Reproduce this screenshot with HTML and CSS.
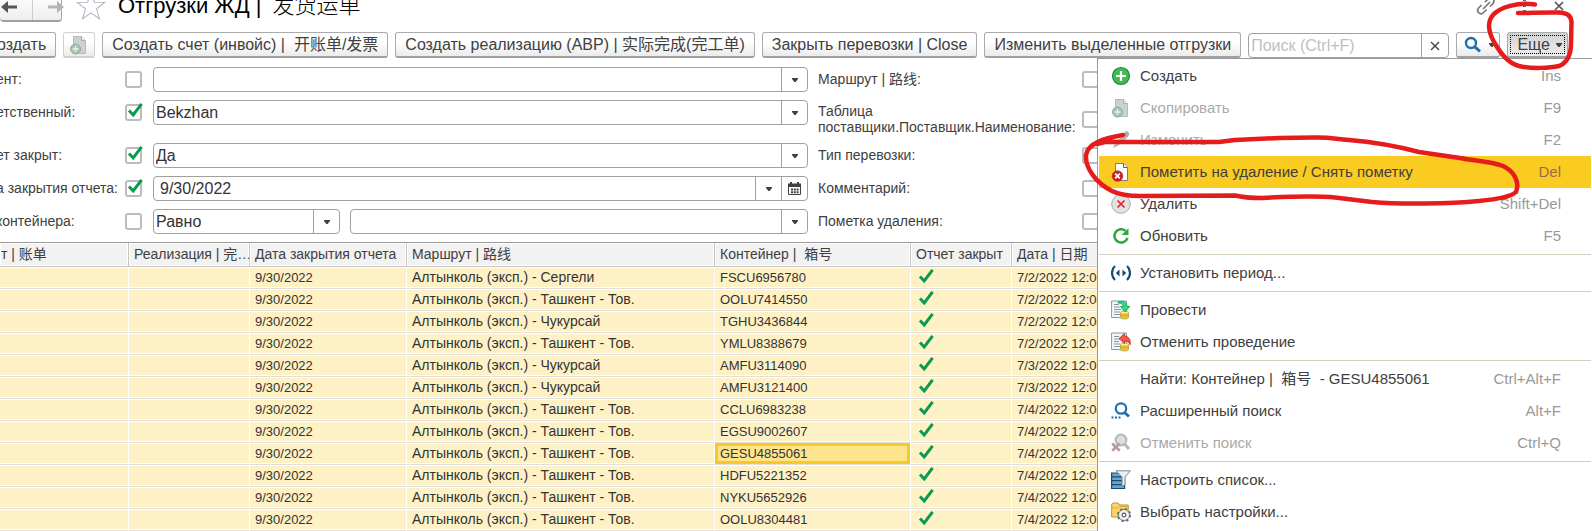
FILE: index.html
```html
<!DOCTYPE html>
<html lang="ru">
<head>
<meta charset="utf-8">
<title>Отгрузки ЖД</title>
<link rel="stylesheet" href="styles.css">
</head>
<body>
<svg class="defs" aria-hidden="true">
  <symbol id="check" viewBox="0 0 16 16"><path d="M2 8.500 L6.200 13 L14.600 1.800" fill="none" stroke="#0a9a4e" stroke-width="3"/></symbol>
  <symbol id="caret" viewBox="0 0 6 4"><path d="M0 0h6v1L3.600 4H2.400L0 1z" fill="#404040"/></symbol>
  <symbol id="copy" viewBox="0 0 20 20"><path d="M4.500 1.500h8l4 4v13h-12z" fill="#cbd0d4" stroke="#b4bac0"/><path d="M12.500 1.500v4h4" fill="#e8eaec" stroke="#a6adb4"/><circle cx="6.500" cy="14" r="5" fill="#a9c2ae" stroke="#8fae96"/><path d="M6.500 11v6M3.500 14h6" stroke="#e9f1ea" stroke-width="1.300"/></symbol>
</svg>

<div class="app">
  <header class="head">
    <div class="nav">
      <button type="button" aria-label="Назад"><svg width="18" height="14" viewBox="0 0 18 14"><path d="M17 7H6" stroke="#555" stroke-width="3"/><path d="M8 1L1 7l7 6z" fill="#555"/></svg></button>
      <button type="button" aria-label="Вперед"><svg width="18" height="14" viewBox="0 0 18 14"><path d="M1 7h10" stroke="#b5b5b5" stroke-width="3"/><path d="M10 1l7 6-7 6z" fill="#b5b5b5"/></svg></button>
    </div>
    <svg class="star" width="30" height="30" viewBox="0 0 30 30"><path d="M15 1.500l3.400 9.800 10.400.2-8.300 6.300 3 10L15 21.800l-8.500 6 3-10-8.300-6.300 10.400-.2z" fill="#fff" stroke="#b3bac4" stroke-width="1.100"/></svg>
    <h1>Отгрузки ЖД | <span>发货运单</span></h1>
    <div class="winbtns">
      <button type="button" aria-label="Ссылка"><svg width="20" height="20" viewBox="0 0 20 20" fill="none" stroke="#777" stroke-width="1.700"><path d="M5.500 9L2.600 12c-3 4 2 7.500 5 4.500l3-3M9 6l3-3c4-3 7.500 1 5 4.500l-3 3M7 13l7-7"/></svg></button>
      <button type="button" aria-label="Меню"><svg width="6" height="20" viewBox="0 0 6 20" fill="#666"><rect x="1" y="2" width="3" height="3"/><rect x="1" y="8" width="3" height="3"/><rect x="1" y="14" width="3" height="3"/></svg></button>
      <button type="button" aria-label="Закрыть"><svg width="10" height="10" viewBox="0 0 10 10"><path d="M1 1l8 8M9 1L1 9" stroke="#555" stroke-width="1.700"/></svg></button>
    </div>
  </header>

  <div class="toolbar">
    <button type="button" class="btn first">оздать</button>
    <button type="button" class="btn icon faded" aria-label="Скопировать"><svg width="20" height="20"><use href="#copy"/></svg></button>
    <button type="button" class="btn">Создать счет (инвойс) |&nbsp; 开账单/发票</button>
    <button type="button" class="btn">Создать реализацию (АВР) | 实际完成(完工单)</button>
    <button type="button" class="btn">Закрыть перевозки | Close</button>
    <button type="button" class="btn">Изменить выделенные отгрузки</button>
    <div class="search"><input type="text" placeholder="Поиск (Ctrl+F)" aria-label="Поиск"><button type="button" aria-label="Очистить"><svg width="10" height="10" viewBox="0 0 10 10"><path d="M1 1l8 8M9 1L1 9" stroke="#444" stroke-width="1.400"/></svg></button></div>
    <button type="button" class="btn find" aria-label="Найти"><svg width="18" height="18" viewBox="0 0 18 18" fill="none" stroke="#2270a8"><circle cx="7" cy="7" r="5" stroke-width="2.400"/><path d="M10.800 10.800l5.200 4.700" stroke-width="3"/></svg><svg width="6" height="4"><use href="#caret"/></svg></button>
    <button type="button" class="btn more"><span>Еще <svg width="6" height="4"><use href="#caret"/></svg></span></button>
  </div>

  <form class="filters">
    <label for="c1" class="lead">ент:</label>
    <span class="tick"><input type="checkbox" id="c1"></span>
    <div class="combo"><select aria-label="Клиент"><option></option></select><span class="drop"><svg width="6" height="4"><use href="#caret"/></svg></span></div>
    <label for="d1">Маршрут | 路线:</label>
    <span class="tick"><input type="checkbox" id="d1"></span>

    <label for="c2" class="lead">етственный:</label>
    <span class="tick"><input type="checkbox" id="c2" checked><svg width="16" height="16"><use href="#check"/></svg></span>
    <div class="combo"><select aria-label="Ответственный"><option>Bekzhan</option></select><span class="drop"><svg width="6" height="4"><use href="#caret"/></svg></span></div>
    <label for="d2" class="two">Таблица поставщики.Поставщик.Наименование:</label>
    <span class="tick mid"><input type="checkbox" id="d2"></span>

    <label for="c3" class="lead">ет закрыт:</label>
    <span class="tick"><input type="checkbox" id="c3" checked><svg width="16" height="16"><use href="#check"/></svg></span>
    <div class="combo"><select aria-label="Отчет закрыт"><option>Да</option></select><span class="drop"><svg width="6" height="4"><use href="#caret"/></svg></span></div>
    <label for="d3">Тип перевозки:</label>
    <span class="tick"><input type="checkbox" id="d3"></span>

    <label for="c4" class="lead">а закрытия отчета:</label>
    <span class="tick"><input type="checkbox" id="c4" checked><svg width="16" height="16"><use href="#check"/></svg></span>
    <div class="combo"><input type="text" value="9/30/2022" aria-label="Дата закрытия отчета"><button type="button" class="drop" aria-label="Выбрать"><svg width="6" height="4"><use href="#caret"/></svg></button><button type="button" class="drop" aria-label="Календарь"><svg width="13" height="13" viewBox="0 0 13 13"><path d="M.5 4V2.500h12V12.500H.5z" fill="none" stroke="#404040"/><path d="M0 1.500h13V5H0zM2 0h2v2H2zM9 0h2v2H9z" fill="#404040"/><path d="M3 6.500h2v2H3zM5.800 6.500h2v2h-2zM8.600 6.500h2v2h-2zM3 9.300h2v2H3zM5.800 9.300h2v2h-2zM8.600 9.300h2v2h-2z" fill="#404040"/></svg></button></div>
    <label for="d4">Комментарий:</label>
    <span class="tick"><input type="checkbox" id="d4"></span>

    <label for="c5" class="lead">контейнера:</label>
    <span class="tick"><input type="checkbox" id="c5"></span>
    <div class="pair">
      <div class="combo"><select aria-label="Вид сравнения"><option>Равно</option></select><span class="drop"><svg width="6" height="4"><use href="#caret"/></svg></span></div>
      <div class="combo"><select aria-label="Номер контейнера"><option></option></select><span class="drop"><svg width="6" height="4"><use href="#caret"/></svg></span></div>
    </div>
    <label for="d5">Пометка удаления:</label>
    <span class="tick"><input type="checkbox" id="d5"></span>
  </form>

  <table class="list">
    <colgroup><col class="w1"><col class="w2"><col class="w3"><col class="w4"><col class="w5"><col class="w6"><col></colgroup>
    <thead><tr><th>т | 账单</th><th>Реализация | 完…</th><th>Дата закрытия отчета</th><th>Маршрут | 路线</th><th>Контейнер |&nbsp; 箱号</th><th>Отчет закрыт</th><th>Дата | 日期</th></tr></thead>
    <tbody>
      <tr><td></td><td></td><td>9/30/2022</td><td class="route">Алтынколь (эксп.) - Сергели</td><td>FSCU6956780</td><td><svg width="16" height="16"><use href="#check"/></svg></td><td>7/2/2022 12:00:00</td></tr>
      <tr><td></td><td></td><td>9/30/2022</td><td class="route">Алтынколь (эксп.) - Ташкент - Тов.</td><td>OOLU7414550</td><td><svg width="16" height="16"><use href="#check"/></svg></td><td>7/2/2022 12:00:00</td></tr>
      <tr><td></td><td></td><td>9/30/2022</td><td class="route">Алтынколь (эксп.) - Чукурсай</td><td>TGHU3436844</td><td><svg width="16" height="16"><use href="#check"/></svg></td><td>7/2/2022 12:00:00</td></tr>
      <tr><td></td><td></td><td>9/30/2022</td><td class="route">Алтынколь (эксп.) - Ташкент - Тов.</td><td>YMLU8388679</td><td><svg width="16" height="16"><use href="#check"/></svg></td><td>7/2/2022 12:00:00</td></tr>
      <tr><td></td><td></td><td>9/30/2022</td><td class="route">Алтынколь (эксп.) - Чукурсай</td><td>AMFU3114090</td><td><svg width="16" height="16"><use href="#check"/></svg></td><td>7/3/2022 12:00:00</td></tr>
      <tr><td></td><td></td><td>9/30/2022</td><td class="route">Алтынколь (эксп.) - Чукурсай</td><td>AMFU3121400</td><td><svg width="16" height="16"><use href="#check"/></svg></td><td>7/3/2022 12:00:00</td></tr>
      <tr><td></td><td></td><td>9/30/2022</td><td class="route">Алтынколь (эксп.) - Ташкент - Тов.</td><td>CCLU6983238</td><td><svg width="16" height="16"><use href="#check"/></svg></td><td>7/4/2022 12:00:00</td></tr>
      <tr><td></td><td></td><td>9/30/2022</td><td class="route">Алтынколь (эксп.) - Ташкент - Тов.</td><td>EGSU9002607</td><td><svg width="16" height="16"><use href="#check"/></svg></td><td>7/4/2022 12:00:00</td></tr>
      <tr><td></td><td></td><td>9/30/2022</td><td class="route">Алтынколь (эксп.) - Ташкент - Тов.</td><td class="cur">GESU4855061</td><td><svg width="16" height="16"><use href="#check"/></svg></td><td>7/4/2022 12:00:00</td></tr>
      <tr><td></td><td></td><td>9/30/2022</td><td class="route">Алтынколь (эксп.) - Ташкент - Тов.</td><td>HDFU5221352</td><td><svg width="16" height="16"><use href="#check"/></svg></td><td>7/4/2022 12:00:00</td></tr>
      <tr><td></td><td></td><td>9/30/2022</td><td class="route">Алтынколь (эксп.) - Ташкент - Тов.</td><td>NYKU5652926</td><td><svg width="16" height="16"><use href="#check"/></svg></td><td>7/4/2022 12:00:00</td></tr>
      <tr><td></td><td></td><td>9/30/2022</td><td class="route">Алтынколь (эксп.) - Ташкент - Тов.</td><td>OOLU8304481</td><td><svg width="16" height="16"><use href="#check"/></svg></td><td>7/4/2022 12:00:00</td></tr>
    </tbody>
  </table>

  <div class="menu" role="menu">
    <button type="button" role="menuitem"><svg width="20" height="20" viewBox="0 0 20 20"><circle cx="10" cy="10" r="8.500" fill="#45b955" stroke="#20893a" stroke-width="1.200"/><path d="M10 5v10M5 10h10" stroke="#fff" stroke-width="2.200"/></svg><span>Создать</span><kbd>Ins</kbd></button>
    <button type="button" role="menuitem" disabled><svg width="20" height="20"><use href="#copy"/></svg><span>Скопировать</span><kbd>F9</kbd></button>
    <button type="button" role="menuitem" disabled><svg width="20" height="20" viewBox="0 0 20 20"><path d="M2 18l2-5 8.500-8.500 3.500 3.500L7 16z" fill="#b3bbb9"/><path d="M12 4l2.500-2.500c1-1 4.500 1 3.500 3.500L16 8z" fill="#a2adb5"/></svg><span>Изменить</span><kbd>F2</kbd></button>
    <button type="button" role="menuitem" class="active"><svg width="20" height="20" viewBox="0 0 20 20"><path d="M4.500 1.500h8l4 4v13h-12z" fill="#fff" stroke="#7b8086"/><path d="M12.500 1.500v4h4" fill="#eee" stroke="#5f656b"/><circle cx="6.500" cy="14" r="5.300" fill="#d0202a" stroke="#a81920" stroke-width=".6"/><path d="M4.200 11.700l4.600 4.600M8.800 11.700l-4.600 4.600" stroke="#fff" stroke-width="1.700"/></svg><span>Пометить на удаление / Снять пометку</span><kbd>Del</kbd></button>
    <button type="button" role="menuitem"><svg width="20" height="20" viewBox="0 0 20 20"><circle cx="10" cy="10" r="9.300" fill="#e2e2e2" stroke="#aaa"/><path d="M6.500 6.500l7 7M13.500 6.500l-7 7" stroke="#e3202a" stroke-width="1.600"/></svg><span>Удалить</span><kbd>Shift+Del</kbd></button>
    <button type="button" role="menuitem"><svg width="20" height="20" viewBox="0 0 20 20"><path d="M14.500 4.800A6.700 6.700 0 1 0 16.500 12" fill="none" stroke="#2fa53c" stroke-width="2.500"/><path d="M17.500 2.200V9h-7z" fill="#2fa53c"/></svg><span>Обновить</span><kbd>F5</kbd></button>
    <hr>
    <button type="button" role="menuitem"><svg width="20" height="20" viewBox="0 0 20 20"><path d="M4 3C0 6.500 0 13.500 4 17M16 3c4 3.500 4 10.500 0 14" fill="none" stroke="#15506f" stroke-width="2.200"/><path d="M8.500 6.500v7L4.800 10zM11.500 6.500v7l3.700-3.500z" fill="#0f4c78"/></svg><span>Установить период...</span></button>
    <hr>
    <button type="button" role="menuitem"><svg width="20" height="20" viewBox="0 0 20 20"><path d="M.6 1h14.800v16.500H.6z" fill="#f6f7f8" stroke="#8b96a2"/><path d="M3 4.500h5M3 7h6M3 9.500h7M3 12h6M3 14.500h6" stroke="#8794a3"/><path d="M9.500 12.500h8v5c0 2-8 2-8 0z" fill="#eacb3d" stroke="#b4922a" stroke-width=".7"/><ellipse cx="13.500" cy="12.500" rx="4" ry="1.500" fill="#fff09a" stroke="#b4922a" stroke-width=".6"/><path d="M9.500 15c1 1.400 7 1.400 8 0" fill="none" stroke="#b4922a" stroke-width=".7"/><path d="M7 2c5-1.600 9 0 9 4.500h2.800L14 12 9.500 6.500h2.800C12 4 10 3 7 3z" fill="#2cde82" stroke="#14994f" stroke-width=".8"/></svg><span>Провести</span></button>
    <button type="button" role="menuitem"><svg width="20" height="20" viewBox="0 0 20 20"><path d="M.6 1h14.800v16.500H.6z" fill="#f6f7f8" stroke="#8b96a2"/><path d="M3 4.500h5M3 7h6M3 9.500h5M3 12h6M3 14.500h6" stroke="#8794a3"/><path d="M9.500 12.500h8v5c0 2-8 2-8 0z" fill="#eacb3d" stroke="#b4922a" stroke-width=".7"/><ellipse cx="13.500" cy="12.500" rx="4" ry="1.500" fill="#fff09a" stroke="#b4922a" stroke-width=".6"/><path d="M9.500 15c1 1.400 7 1.400 8 0" fill="none" stroke="#b4922a" stroke-width=".7"/><path d="M8 6.500L13.500 1.500V4c4 .3 6.500 3.500 5.700 8.800C18 10 16.500 9.200 13.500 9.200v2.500z" fill="#fb5347" stroke="#b42c26" stroke-width=".8"/></svg><span>Отменить проведение</span></button>
    <hr>
    <button type="button" role="menuitem"><svg width="20" height="20"></svg><span>Найти: Контейнер |&nbsp; 箱号&nbsp; - GESU4855061</span><kbd>Ctrl+Alt+F</kbd></button>
    <button type="button" role="menuitem"><svg width="20" height="20" viewBox="0 0 20 20" fill="none" stroke="#2270a8"><circle cx="10" cy="7.500" r="5.200" stroke-width="2.200"/><path d="M13.500 11.500l4.500 4" stroke-width="3"/><path d="M.5 16.500h2M4 16.500h2M7.500 16.500h2" stroke-width="2.200"/></svg><span>Расширенный поиск</span><kbd>Alt+F</kbd></button>
    <button type="button" role="menuitem" disabled><svg width="20" height="20" viewBox="0 0 20 20" fill="none"><circle cx="10" cy="7" r="5.400" fill="#dcdfe2" stroke="#b4b9bd" stroke-width="2"/><path d="M13.500 11l4.500 5" stroke="#b4b9bd" stroke-width="3"/><path d="M1.200 10.500l7.500 7.300M8.700 10.500l-7.500 7.300" stroke="#b59a9e" stroke-width="2.600"/></svg><span>Отменить поиск</span><kbd>Ctrl+Q</kbd></button>
    <hr>
    <button type="button" role="menuitem"><svg width="20" height="20" viewBox="0 0 20 20"><path d="M.6 3h8l5 5v10.500H.6z" fill="#6ba6d0" stroke="#174e6e" stroke-width="1.200"/><path d="M.6 6.800h13M.6 10.700h13M.6 14.600h13" stroke="#174e6e" stroke-width="1.200"/><path d="M5 .8h14.500L14 7v7.800l-3 1.600V7z" fill="#eceff2" stroke="#74808c" stroke-width=".9"/></svg><span>Настроить список...</span></button>
    <button type="button" role="menuitem"><svg width="20" height="20" viewBox="0 0 20 20"><path d="M.7 15V2.500L2.200 1h5l1.500 2h8.500v12z" fill="#fbd568" stroke="#c18e2d"/><path d="M.7 6h6l1.500-1.500h9" fill="none" stroke="#d9a943"/><circle cx="13" cy="13" r="5.400" fill="#e3e6e8" stroke="#656c73" stroke-width="1"/><circle cx="13" cy="13" r="6.200" fill="none" stroke="#656c73" stroke-width="1.800" stroke-dasharray="2.400 2.470"/><circle cx="13" cy="13" r="4.900" fill="#edeff0"/><circle cx="13" cy="13" r="1.800" fill="#fff" stroke="#555c63" stroke-width="1.200"/></svg><span>Выбрать настройки...</span></button>
  </div>

  <svg class="marks" width="506" height="210" viewBox="1086 0 506 210" aria-hidden="true">
    <path d="M1535 4.500C1518 2 1500 7 1493 15C1487 22 1488 31 1494 42C1501 54 1508 63 1519 66C1532 69 1550 68 1559 66C1569 62 1571 53 1571 43L1571.500 22C1571 15 1567 13 1559 12.500C1545 12 1530 13 1518 13"/>
    <path d="M1123 135C1105 138 1088 143 1086 155C1085 168 1096 183 1112 191C1120 195 1130 196 1140 196L1235 195.500C1245 198 1255 198 1262 198C1290 196.500 1320 196 1335 197.500L1372 202C1400 204.500 1450 204 1479 201C1498 199 1511 197 1516 192C1520 182 1514 171 1503 166C1490 161 1475 161 1460 158L1419 152C1400 147 1375 142 1349 140C1335 139 1330 137 1315 137.500L1279 138L1235 140L1219 142L1105 142L1097 144"/>
  </svg>
</div>
</body>
</html>
```
FILE: styles.css
```css
* { box-sizing: border-box; }
body {
  margin: 0;
  overflow: hidden;
  background: #fff;
  color: #404040;
  font: 16px/20px "Liberation Sans", "Noto Sans CJK SC", sans-serif;
}
button, input, select { font: inherit; color: inherit; }
button { margin: 0; padding: 0; border: 0; background: none; }
svg { flex: none; }
.defs { position: absolute; width: 0; height: 0; }
.app { position: relative; height: 100vh; overflow: hidden; }

.head { display: flex; align-items: flex-end; height: 22px; }
.nav {
  display: flex;
  width: 62px;
  height: 30px;
  border: 1px solid #a8a8a8;
  border-bottom: 2px solid #a0a0a0;
  border-left: 0;
  border-radius: 4px;
  background: linear-gradient(#fff, #eee);
}
.nav button { flex: 0 0 45px; display: flex; align-items: center; justify-content: center; }
.nav button:first-child { flex-basis: 17px; border-right: 1px solid #ccc; justify-content: flex-end; padding-right: 14px; }
.star { margin: 0 12px 1px 14px; }
h1 { margin: 0; font-size: 22px; line-height: 32px; font-weight: 400; color: #000; white-space: pre; }
h1 span { margin-left: 5px; font-weight: 300; }
.winbtns { display: flex; align-items: center; gap: 26px; height: 20px; margin: 0 28px 6px auto; }
.winbtns button { display: flex; }

.toolbar { display: flex; gap: 7px; padding: 10px 24px 0 0; height: 36px; }
.btn {
  height: 26px;
  padding: 0 9px;
  border: 1px solid #ababab;
  border-bottom: 2px solid #a0a0a0;
  border-radius: 3px;
  background: linear-gradient(#fff 40%, #ebebeb);
  white-space: nowrap;
}
.first { margin-left: -13px; }
.icon { width: 32px; padding: 0 5px; display: flex; align-items: center; }
.faded { border-color: #d0d0d0; }
.search { display: flex; flex: 1; min-width: 0; height: 25px; margin-top: 1px; border: 1px solid #a0a0a0; border-radius: 4px; }
.search input { flex: 1; min-width: 0; padding: 0 2px; border: 0; background: none; outline: 0; }
.search input::placeholder { color: #c0c0c0; }
.search button { width: 27px; border-left: 1px solid #a0a0a0; display: flex; align-items: center; justify-content: center; }
.find { width: 44px; display: flex; align-items: center; justify-content: space-between; padding: 0 4px 0 7px; }
.more { width: 61px; padding: 0 2px; background: linear-gradient(#d2d2d2, #eee); }
.more span { display: flex; align-items: center; justify-content: flex-end; gap: 6px; height: 19px; padding-right: 2px; border: 1px dotted #000; }

.filters {
  display: grid;
  grid-template-columns: 125px 28px minmax(0, 655fr) 274px minmax(0, 510fr);
  grid-template-rows: 25px 35px 25px 25px 25px;
  row-gap: 8px;
  padding: 9px 0 8px;
}
.filters label { font-size: 14px; line-height: 25px; white-space: nowrap; }
.filters .lead { margin-left: -4px; }
.filters .combo + label, .filters .pair + label { padding-left: 10px; }
.filters .two { line-height: 16px; padding-top: 3px; white-space: normal; }
.tick { position: relative; height: 25px; padding-top: 4px; }
.tick.mid { padding-top: 11px; }
.tick input { appearance: none; display: block; width: 17px; height: 17px; margin: 0; border: 2px solid #bcbcbc; border-radius: 3px; background: #fff; }
.tick svg { position: absolute; left: 2px; top: 2px; }
.combo { display: flex; height: 25px; border: 1px solid #a0a0a0; border-radius: 4px; background: #fff; }
.combo select, .combo input { appearance: none; flex: 1; min-width: 0; padding: 0 2px; border: 0; background: none; outline: 0; color: #333; }
.combo input { padding: 0 6px; }
.drop { width: 26px; border-left: 1px solid #a0a0a0; display: flex; align-items: center; justify-content: center; }
.pair { display: grid; grid-template-columns: 187px 1fr; gap: 10px; }

.list { width: 100%; table-layout: fixed; border-collapse: separate; border-spacing: 0; border-top: 1px solid #999; font-size: 13px; line-height: 19px; }
.w1 { width: 129px; }
.w2 { width: 121px; }
.w3 { width: 157px; }
.w4 { width: 308px; }
.w5 { width: 196px; }
.w6 { width: 101px; }
.list th, .list td { padding: 0 0 0 5px; text-align: left; white-space: nowrap; overflow: hidden; }
.list th { height: 24px; font-size: 14px; font-weight: 400; background: #f2f2f2; border-right: 1px solid #c4c4c4; border-bottom: 1px solid #c4c4c4; box-shadow: inset 0 0 0 1px #fff; }
.list th:first-child { padding-left: 1px; }
.list td { height: 22px; color: #333; background: #fff1c6; border-right: 1px solid #fff; border-bottom: 1px solid #dfdfe3; box-shadow: inset 0 1px #fff, inset 0 -1px #fff; }
.list td.route { font-size: 14px; }
.list td svg { display: block; margin: 0 0 3px 2px; }
.list td.cur { background: #ffe48e; box-shadow: inset 0 0 0 3px #f9c91f; }

.menu { position: absolute; top: 58px; right: 0; bottom: 0; width: 495px; overflow: hidden; border: 1px solid #999; border-width: 1px 0 0 1px; padding: 1px 1px 0; background: #fff; font-size: 15px; }
.menu button { display: flex; align-items: center; width: 100%; height: 32px; padding: 0 30px 0 12px; text-align: left; }
.menu span { flex: 1; margin-left: 9px; }
.menu kbd { font: inherit; color: #999; }
.menu button:disabled span { color: #aaa; }
.menu .active { background: #facb20; color: #404040; }
.menu .active kbd { color: #9a6b4a; }
.menu hr { height: 1px; margin: 2px 0; border: 0; background: #d3cfbd; }
.marks { position: absolute; top: 0; right: 0; overflow: visible; fill: none; stroke: #e61c1c; stroke-width: 4.5; stroke-linecap: round; stroke-linejoin: round; }
```
